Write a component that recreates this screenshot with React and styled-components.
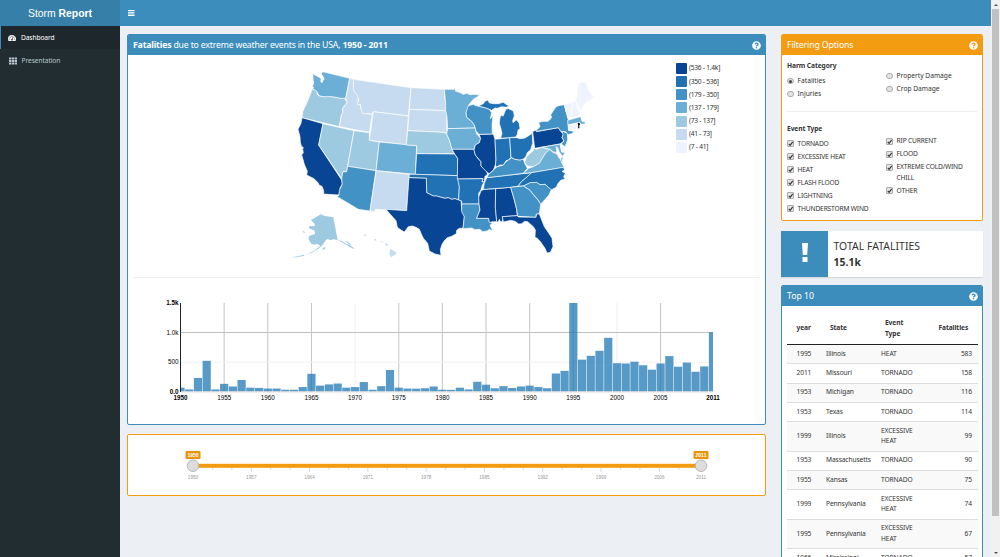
import React from "react";
import styled, { createGlobalStyle } from "styled-components";
import { FaTh, FaQuestionCircle } from "react-icons/fa";

const Global = createGlobalStyle`
  * { box-sizing: border-box; }
  body { margin: 0; overflow: hidden; }
`;

const Page = styled.div`
  display: flex;
  width: 1000px;
  height: 557px;
  overflow: hidden;
  background: #ecf0f5;
  color: #333;
  font: 6.65px/10.3px "Noto Sans", "Open Sans", sans-serif;
`;
const Sidebar = styled.aside`
  width: 120px;
  background: #222d32;
`;
const Logo = styled.div`
  height: 26px;
  background: #367fa9;
  color: #fff;
  text-align: center;
  font: 10.4px/27px "Liberation Sans", Arial, sans-serif;
`;
const NavItem = styled.div`
  display: flex;
  align-items: center;
  gap: 4.5px;
  height: 23px;
  padding-top: 1px;
  padding-left: ${(p) => (p.$active ? 7.4 : 9)}px;
  border-left: ${(p) => (p.$active ? "1.6px solid #3c8dbc" : "0")};
  background: ${(p) => (p.$active ? "#1e282c" : "transparent")};
  color: ${(p) => (p.$active ? "#fff" : "#b8c7ce")};
  letter-spacing: -0.08px;
  svg { width: 8px; height: 8px; }
`;
const Main = styled.div`
  flex: 1;
  min-width: 0;
`;
const Navbar = styled.header`
  display: flex;
  align-items: center;
  height: 26px;
  padding-left: 8px;
  background: #3c8dbc;
  color: #fff;
`;
const Content = styled.div`
  display: flex;
  gap: 15px;
  padding: 8px 8px 0 7px;
`;
const LeftColumn = styled.div`
  display: flex;
  flex-direction: column;
  gap: 9.5px;
  width: 639px;
`;
const RightColumn = styled.div`
  display: flex;
  flex-direction: column;
  width: 202px;
`;
const Box = styled.section`
  height: ${(p) => p.$height}px;
  margin-bottom: ${(p) => p.$after || 0}px;
  border: 1px solid ${(p) => p.$color};
  border-radius: 2px;
  background: #fff;
  overflow: hidden;
`;
const BoxHeader = styled.header`
  display: flex;
  align-items: center;
  justify-content: space-between;
  height: 20px;
  padding: 0 4.5px 0 5px;
  background: ${(p) => p.$color};
  color: #fff;
  font-size: 8.7px;
  letter-spacing: ${(p) => p.$track || 0}px;
  svg { width: 9px; height: 9px; }
`;
const MapArea = styled.div`
  display: flex;
  height: 223px;
  margin: 0 5px;
  padding: 5px 0 0 157px;
  border-bottom: 1px solid #eee;
`;
const MapDrawing = styled.svg`
  flex: none;
  width: 310px;
  height: 210px;
`;
const Legend = styled.div`
  margin: 2px 0 0 76px;
`;
const LegendRow = styled.div`
  display: flex;
  align-items: center;
  gap: 2px;
  height: 13.15px;
  white-space: nowrap;
  letter-spacing: -0.25px;
`;
const Swatch = styled.span`
  width: 11px;
  height: 11px;
  border-radius: 1px;
  background: ${(p) => p.$color};
`;
const Chart = styled.svg`
  display: block;
  width: 600px;
  height: 120px;
  margin: 15px 0 0 32px;
  text { font: 6.3px "Liberation Sans", Arial, sans-serif; fill: #000; }
`;
const Slider = styled.svg`
  display: block;
  width: 540px;
  height: 40px;
  margin: 13px 0 0 50px;
  text { font: 4.7px "Liberation Sans", Arial, sans-serif; fill: #999; text-anchor: middle; }
`;
const FilterBody = styled.div`
  padding: 6.4px 5px 0;
`;
const GroupTitle = styled.div`
  height: 10px;
  line-height: 9px;
  font-weight: 700;
  letter-spacing: -0.08px;
`;
const Choices = styled.div`
  display: grid;
  grid-template-columns: 99px 1fr;
  height: ${(p) => p.$height}px;
  padding-top: 4.6px;
`;
const ChoiceColumn = styled.div`
  margin-top: ${(p) => p.$shift || 0}px;
`;
const Choice = styled.label`
  display: flex;
  align-items: flex-start;
  gap: 4px;
  margin-bottom: 2.7px;
  letter-spacing: ${(p) => p.$track || 0}px;
`;
const Mark = styled.span`
  display: grid;
  place-items: center;
  flex: none;
  width: 6.6px;
  height: 6.6px;
  margin-top: 1.8px;
  border: 0.8px solid #aaa;
  border-radius: ${(p) => (p.$round ? "50%" : "1px")};
  background: #e4e4e4;
  svg { width: 5.4px; height: 5.4px; }
`;
const Dot = styled.i`
  width: 3px;
  height: 3px;
  border-radius: 50%;
  background: #444;
`;
const Divider = styled.div`
  height: 1px;
  margin-bottom: 11.6px;
  background: #eee;
`;
const InfoBox = styled.section`
  display: flex;
  height: 46.5px;
  margin: 0 0 8px;
  background: #fff;
  box-shadow: 0 1px 1px rgba(0, 0, 0, 0.1);
`;
const InfoIcon = styled.div`
  display: grid;
  place-items: center;
  width: 47px;
  padding-bottom: 1px;
  background: #3c8dbc;
`;
const InfoText = styled.div`
  padding: 7px 5.5px;
  font-size: 10.4px;
  line-height: 16px;
  letter-spacing: 0.05px;
  color: #333;
`;
const TableGrid = styled.table`
  width: 191px;
  margin: 9px 5px 0;
  border-collapse: collapse;
  table-layout: fixed;
  letter-spacing: -0.1px;
`;
const HeadCell = styled.th`
  width: ${(p) => p.$width}px;
  height: 29.5px;
  padding: 0 0 0 ${(p) => p.$pad}px;
  border-bottom: 1px solid #222;
  text-align: left;
  vertical-align: middle;
  position: relative;
  top: -1px;
`;
const Row = styled.tr`
  height: ${(p) => (p.$tall ? 29.5 : 19.25)}px;
  background: ${(p) => (p.$odd ? "#f9f9f9" : "#fff")};
`;
const Cell = styled.td`
  padding: 0 ${(p) => (p.$right ? 6 : 0)}px 0 ${(p) => p.$pad || 0}px;
  border-top: 1px solid #ddd;
  text-align: ${(p) => (p.$right ? "right" : "left")};
  white-space: ${(p) => (p.$wrap ? "normal" : "nowrap")};
`;
const Scrollbar = styled.div`
  display: flex;
  flex-direction: column;
  align-items: center;
  width: 9px;
  padding: 4px 0 3px;
  background: #f1f1f1;
`;
const Thumb = styled.div`
  width: 7.5px;
  height: 507px;
  margin: 3px 0 auto;
  background: #c1c1c1;
`;
const Arrow = styled.span`
  width: 0;
  height: 0;
  border: 2px solid transparent;
  border-${(p) => (p.$down ? "top" : "bottom")}: 2.5px solid #505050;
  border-${(p) => (p.$down ? "bottom" : "top")}: 0;
`;

const shades = ["#084594", "#2171b5", "#4292c6", "#6baed6", "#9ecae1", "#c6dbef", "#eff3ff"];
const ranges = ["(536 - 1.4k]", "(350 - 536]", "(179 - 350]", "(137 - 179]", "(73 - 137]", "(41 - 73]", "(7 - 41]"];

// Each shape: key, shade index, outline.
const states = [
  ["WA", 3, "69,40 74,45 80,47 85,51 92,53 93,58 92,64 96,69 98,61 102,60 101,53 98,47 93,42 98,36 102,36 179,55 167,116 150,115 130,111 105,111 88,108 82,97 67,87 71,84 67,78 71,72 69,55"],
  ["OR", 4, "67,87 75,90 80,94 82,104 88,108 105,111 112,109 130,111 150,115 165,115 167,121 172,126 167,133 157,146 159,156 154,166 148,200 36,173 38,155 50,130 60,105"],
  ["CA", 0, "36,173 99,191 86,255 155,360 157,372 150,384 150,392 146,405 101,402 101,392 96,379 88,376 84,368 72,356 50,345 52,333 46,320 42,310 39,298 35,285 40,278 37,263 41,264 34,258 31,247 30,230 24,208 33,190"],
  ["NV", 4, "99,191 192,212 173,318 170,335 160,334 158,340 156,358 86,255"],
  ["ID", 5, "179,55 191,58 190,78 195,90 206,110 203,125 211,133 213,147 222,160 247,163 238,217 148,200 154,166 159,156 157,146 167,133 172,126 167,116"],
  ["MT", 5, "191,58 363,83 355,168 250,155 247,163 233,160 219,162 213,147 211,133 203,135 203,125 207,121 202,107 190,90"],
  ["WY", 5, "250,155 355,168 349,255 238,241"],
  ["UT", 4, "192,212 238,218 238,241 268,246 258,332 173,319"],
  ["AZ", 2, "173,319 258,332 240,453 205,448 142,410 147,405 148,392 157,372 155,357 158,336 170,335"],
  ["CO", 3, "268,246 380,257 376,343 258,332"],
  ["NM", 5, "258,332 358,343 350,452 288,448 287,450 256,448 254,456 240,453"],
  ["ND", 5, "363,83 463,88 464,110 467,130 467,152 358,148"],
  ["SD", 5, "358,148 467,152 471,170 470,205 472,222 464,218 453,217 440,216 353,212"],
  ["NE", 4, "353,212 440,216 453,217 464,218 470,222 478,240 483,255 486,268 494,281 380,281 380,257 349,255"],
  ["KS", 1, "380,281 494,282 503,295 503,347 376,343"],
  ["OK", 1, "358,343 377,343 503,347 508,380 506,420 495,416 485,418 475,413 465,415 450,411 440,408 430,408 410,398 409,355 357,353"],
  ["TX", 0, "357,353 409,355 410,398 430,408 440,408 450,411 465,415 475,413 485,418 495,416 513,422 515,448 521,460 523,470 519,505 508,505 500,511 499,521 485,529 472,533 463,542 456,553 451,569 453,586 435,582 418,573 413,550 400,535 393,520 388,508 378,502 367,498 355,500 343,516 333,510 322,502 318,482 300,462 288,448 350,452"],
  ["MN", 3, "463,88 492,88 493,82 497,94 508,97 520,103 530,100 540,104 555,103 570,106 550,118 536,135 535,150 528,157 530,172 545,184 553,195 555,204 473,206 471,170 467,152 467,130"],
  ["IA", 3, "473,206 555,204 560,222 572,235 568,248 556,255 552,268 486,268 478,240 470,222"],
  ["MO", 0, "486,268 552,268 556,285 565,297 573,305 573,318 587,330 592,340 590,347 585,348 583,365 576,366 579,356 502,357 503,295 494,282"],
  ["AR", 1, "503,357 579,356 576,366 583,365 576,378 573,390 566,400 567,432 515,432 515,423 506,420 508,380"],
  ["LA", 2, "515,432 567,432 570,450 560,475 596,475 598,485 607,490 600,496 609,514 598,508 592,513 577,515 570,508 555,509 545,504 519,506 523,470 515,455"],
  ["MS", 0, "583,388 617,386 616,440 620,485 607,485 598,488 596,475 560,475 570,450 567,432 566,412 573,392"],
  ["AL", 0, "617,386 662,382 673,420 680,448 682,467 637,470 638,484 632,486 628,478 625,486 620,485 616,440"],
  ["TN", 1, "590,353 725,338 720,345 704,357 693,366 685,378 662,382 580,388 583,370"],
  ["KY", 2, "590,353 596,343 605,335 620,321 640,315 646,307 655,300 665,293 675,298 690,300 700,297 704,310 712,325 700,340"],
  ["IL", 0, "567,223 610,222 615,238 618,300 616,315 610,330 597,341 587,333 573,318 573,305 556,285 552,270 556,255 568,248 572,235"],
  ["IN", 1, "615,238 659,233 663,292 655,300 648,302 640,315 630,315 620,321 616,315 618,300"],
  ["OH", 1, "659,233 680,233 690,236 705,234 727,220 728,250 722,269 712,278 707,291 700,297 690,300 675,298 663,292"],
  ["MI", 1, "648,147 656,146 670,153 673,168 668,181 669,188 679,180 687,188 690,205 684,211 682,223 677,231 632,235 636,220 632,203 628,190 629,180 631,170 636,164 639,169 644,157"],
  ["UP", 1, "565,138 580,131 585,124 594,120 598,129 612,131 625,131 640,127 650,134 658,138 648,142 635,140 622,145 615,144 605,151 598,148 583,143"],
  ["WI", 2, "535,137 550,133 555,136 565,139 583,143 598,148 605,158 601,176 609,167 606,195 607,222 567,223 558,213 553,195 545,184 530,172 528,157"],
  ["PA", 0, "728,215 738,210 739,215 805,203 813,215 822,222 816,232 822,243 810,252 734,265"],
  ["NY", 2, "738,212 750,200 746,187 760,184 774,184 781,178 785,172 782,164 797,142 805,137 823,134 828,155 832,163 835,180 835,211 850,214 857,210 845,221 832,224 827,215 813,215 805,203 740,214"],
  ["NJ", 2, "816,213 832,220 833,240 825,260 814,252 822,243 816,232 819,225"],
  ["VT", 6, "823,134 850,127 844,150 844,172 833,175"],
  ["NH", 6, "850,127 856,120 869,158 865,169 844,174 844,150"],
  ["ME", 6, "856,120 862,108 861,92 866,70 873,65 880,68 887,65 897,95 902,97 906,105 914,110 905,116 900,124 892,123 885,133 878,139 872,155"],
  ["MA", 3, "833,181 865,172 872,170 876,184 886,186 885,192 875,193 868,187 834,195"],
  ["CT", 6, "834,195 863,190 863,205 837,212"],
  ["WV", 4, "732,265 739,268 755,262 770,266 782,268 767,279 757,295 748,310 730,320 712,318 704,307 709,292 720,280 729,273"],
  ["VA", 3, "780,268 787,276 801,282 806,292 813,301 816,310 822,322 725,338 700,340 716,325 730,320 748,310 757,295 767,279"],
  ["MD", 3, "755,262 810,252 815,276 825,277 819,290 808,277 803,263 799,260 800,278 788,275 782,268"],
  ["DE", 6, "811,252 818,258 827,275 815,276"],
  ["VB", 3, "813,292 819,292 817,308 813,303"],
  ["NC", 1, "725,338 820,322 824,330 816,334 826,340 821,350 825,357 812,361 803,372 799,382 783,390 765,373 750,374 740,368 720,369 700,378 685,378 693,366 704,357"],
  ["SC", 2, "700,378 720,368 740,367 750,374 765,373 784,389 777,405 752,433 744,420 730,404 720,391"],
  ["GA", 2, "662,382 700,378 720,391 730,404 744,420 752,433 748,461 738,463 738,472 683,469 680,448 673,420"],
  ["FL", 0, "637,470 682,467 685,471 738,472 740,462 748,462 763,500 776,519 786,535 789,560 781,577 771,579 765,565 752,546 742,535 735,532 736,510 730,500 713,485 704,484 695,491 686,492 675,484 662,481 640,486"],
];
const islands = [
  ["AK", 4, "80,470 92,463 105,468 130,472 143,540 130,538 120,541 114,537 107,541 98,555 84,567 65,578 48,585 75,571 91,557 80,551 75,554 65,552 60,545 55,535 58,527 75,523 74,512 57,505 58,498 73,499 75,493 63,480"],
  ["AK2", 4, "143,540 155,543 166,550 180,556 196,567 186,565 170,555 155,547"],
  ["AK3", 4, "165,541 174,545 184,556 179,555"],
  ["AK4", 4, "97,568 104,560 107,564 100,570"],
  ["AK5", 4, "38,514 45,515 45,518 39,517"],
  ["AK6", 4, "1,592 16,590 30,587 42,584 43,587 20,592"],
  ["HI", 5, "301,566 318,577 320,581 303,592 298,581"],
  ["HI2", 5, "285,549 295,553 293,557 287,555"],
  ["HI3", 5, "253,536 259,538 258,542 253,541"],
  ["HI4", 5, "221,525 227,523 229,527 223,528"],
  ["HI5", 5, "271,544 280,545 278,547 272,546"],
];

const deaths = [65, 35, 230, 520, 35, 130, 85, 195, 65, 60, 50, 50, 30, 30, 75, 300, 100, 120, 135, 65, 75, 160, 30, 90, 365, 65, 50, 48, 55, 85, 30, 28, 65, 35, 165, 115, 55, 90, 60, 85, 100, 75, 55, 305, 350, 1500, 540, 605, 690, 910, 480, 475, 505, 445, 370, 475, 600, 420, 490, 335, 425, 1005];

const rows = [
  [1995, "Illinois", "HEAT", 583],
  [2011, "Missouri", "TORNADO", 158],
  [1953, "Michigan", "TORNADO", 116],
  [1953, "Texas", "TORNADO", 114],
  [1999, "Illinois", "EXCESSIVE HEAT", 99],
  [1953, "Massachusetts", "TORNADO", 90],
  [1955, "Kansas", "TORNADO", 75],
  [1999, "Pennsylvania", "EXCESSIVE HEAT", 74],
  [1995, "Pennsylvania", "EXCESSIVE HEAT", 67],
  [1966, "Mississippi", "TORNADO", 57],
];

function GaugeIcon() {
  return (
    <svg viewBox="0 0 16 16">
      <path d="M8 2a8 8 0 0 0-8 8c0 1.700.5 3 1.200 4.200h13.600A8 8 0 0 0 8 2z" fill="#fff" />
      <g fill="#1e282c">
        <circle cx="2.700" cy="10" r="1.100" />
        <circle cx="4.300" cy="6.200" r="1.100" />
        <circle cx="8" cy="4.600" r="1.100" />
        <circle cx="11.700" cy="6.200" r="1.100" />
        <circle cx="13.300" cy="10" r="1.100" />
        <circle cx="8" cy="11.500" r="1.700" />
        <path d="M7.400 11 8.700 6.500l.9.200L8.700 11.500z" />
      </g>
    </svg>
  );
}

function BarsIcon() {
  return (
    <svg width="6.500" height="6" viewBox="0 0 6.500 6">
      <path d="M0 0h6.500v1.300H0zM0 2.300h6.500v1.300H0zM0 4.600h6.500v1.300H0z" fill="#fff" />
    </svg>
  );
}

function StateMap() {
  return (
    <MapDrawing viewBox="0 0 930 630">
      {states.map(([key, shade, points]) => (
        <polygon key={key} points={points} fill={shades[shade]} stroke="#fff" strokeWidth="2" strokeLinejoin="round" />
      ))}
      {islands.map(([key, shade, points]) => (
        <polygon key={key} points={points} fill={shades[shade]} />
      ))}
      <path d="M863 189l4 -1 4 5 -3 3v9h-4l1 -8z" fill="#000" />
    </MapDrawing>
  );
}

function BarChart() {
  const step = 532.5 / 61;
  const left = 20.5;
  const base = 98.5;
  const ticks = [1950, 1955, 1960, 1965, 1970, 1975, 1980, 1985, 1990, 1995, 2000, 2005, 2011];
  return (
    <Chart viewBox="0 0 600 120">
      {ticks.slice(1, -1).map((t) => (
        <line key={t} x1={left + (t - 1950) * step} x2={left + (t - 1950) * step} y1="10" y2={base} stroke={t === 1970 || t === 2000 ? "#eee" : "#c4c4c4"} strokeWidth="1" />
      ))}
      <line x1={left} x2="553" y1="39.5" y2="39.5" stroke="#c0c0c0" />
      <line x1={left} x2="553" y1="69.2" y2="69.2" stroke="#f1f1f1" />
      {deaths.map((d, i) => {
        const x = Math.max(left, left + i * step - 4.1);
        const end = Math.min(left + 532.5, left + i * step + 4.1);
        const h = (d / 1500) * 88.5;
        return <rect key={i} x={x} y={base - h} width={end - x} height={h} fill="#1f77b4" fillOpacity="0.75" />;
      })}
      <line x1={left} x2="553" y1="99" y2="99" stroke="#e4dcd8" />
      <line x1={left} x2={left} y1="10" y2="99" stroke="#222" />
      {["1.5k", "1.0k", "500", "0.0"].map((label, i) => (
        <text key={label} x="18.5" y={12 + i * 29.5} textAnchor="end" style={{ fontWeight: i % 3 === 0 ? 700 : 400 }}>{label}</text>
      ))}
      {ticks.map((t) => (
        <text key={t} x={left + (t - 1950) * step} y="107" textAnchor="middle" style={{ fontWeight: t === 1950 || t === 2011 ? 700 : 400 }}>{t}</text>
      ))}
    </Chart>
  );
}

function YearSlider() {
  const years = [1950, 1957, 1964, 1971, 1978, 1985, 1992, 1999, 2006, 2011];
  const at = (y) => 15 + ((y - 1950) / 61) * 508;
  return (
    <Slider viewBox="0 0 540 40">
      {Array.from({ length: 27 }, (_, i) => (
        <line key={i} x1={15 + i * 19.43} x2={15 + i * 19.43} y1="20" y2={i % 3 ? 22 : 24} stroke={i % 3 ? "#ccc" : "#b5c8d8"} strokeWidth="0.7" />
      ))}
      <rect x="15" y="15.8" width="508" height="4" fill="#f39c12" />
      {[15, 523].map((x, i) => (
        <g key={x}>
          <rect x={x - 7.5} y="3" width="15" height="8" rx="1" fill="#e8940c" />
          <text x={x} y="9" style={{ fill: "#fff", fontWeight: 700, fontSize: 5 }}>{i ? 2011 : 1950}</text>
          <circle cx={x} cy="17.7" r="5.8" fill="#ddd" stroke="#aaa" strokeWidth="0.8" />
        </g>
      ))}
      {years.map((y) => <text key={y} x={at(y)} y="31">{y}</text>)}
    </Slider>
  );
}

function Option({ label, on, round }) {
  return (
    <Choice $track={round ? 0 : -0.17}>
      <Mark $round={round}>
        {on && (round ? <Dot /> : <svg viewBox="0 0 10 10"><path d="M1.5 5.2 4 8 8.8 1.8" fill="none" stroke="#333" strokeWidth="2.2" /></svg>)}
      </Mark>
      <span>{label}</span>
    </Choice>
  );
}

export default function App() {
  return (
    <Page>
      <Global />
      <Sidebar>
        <Logo>Storm <b>Report</b></Logo>
        <NavItem $active><GaugeIcon />Dashboard</NavItem>
        <NavItem><FaTh />Presentation</NavItem>
      </Sidebar>
      <Main>
        <Navbar><BarsIcon /></Navbar>
        <Content>
          <LeftColumn>
            <Box $height={390.5} $color="#3c8dbc">
              <BoxHeader $color="#3c8dbc" $track={-0.17}>
                <span><b>Fatalities</b> due to extreme weather events in the USA, <b>1950 - 2011</b></span>
                <FaQuestionCircle />
              </BoxHeader>
              <MapArea>
                <StateMap />
                <Legend>
                  {ranges.map((r, i) => <LegendRow key={r}><Swatch $color={shades[i]} />{r}</LegendRow>)}
                </Legend>
              </MapArea>
              <BarChart />
            </Box>
            <Box $height={62} $color="#f39c12"><YearSlider /></Box>
          </LeftColumn>
          <RightColumn>
            <Box $height={187} $after={9.5} $color="#f39c12">
              <BoxHeader $color="#f39c12" $track={-0.1}>Filtering Options<FaQuestionCircle /></BoxHeader>
              <FilterBody>
                <GroupTitle>Harm Category</GroupTitle>
                <Choices $height={40}>
                  <ChoiceColumn>
                    <Option label="Fatalities" round on />
                    <Option label="Injuries" round />
                  </ChoiceColumn>
                  <ChoiceColumn $shift={-5}>
                    <Option label="Property Damage" round />
                    <Option label="Crop Damage" round />
                  </ChoiceColumn>
                </Choices>
                <Divider />
                <GroupTitle>Event Type</GroupTitle>
                <Choices $height={84}>
                  <ChoiceColumn>
                    {["TORNADO", "EXCESSIVE HEAT", "HEAT", "FLASH FLOOD", "LIGHTNING", "THUNDERSTORM WIND"].map((l) => <Option key={l} label={l} on />)}
                  </ChoiceColumn>
                  <ChoiceColumn $shift={-2.2}>
                    {["RIP CURRENT", "FLOOD", "EXTREME COLD/WIND CHILL", "OTHER"].map((l) => <Option key={l} label={l} on />)}
                  </ChoiceColumn>
                </Choices>
              </FilterBody>
            </Box>
            <InfoBox>
              <InfoIcon>
                <svg width="8" height="20" viewBox="0 0 8 20"><path d="M1 0h6l-.8 12H1.8zM1.500 14h5v5h-5z" fill="#fff" /></svg>
              </InfoIcon>
              <InfoText>TOTAL FATALITIES<br /><b>15.1k</b></InfoText>
            </InfoBox>
            <Box $height={330} $color="#3c8dbc">
              <BoxHeader $color="#3c8dbc">Top 10<FaQuestionCircle /></BoxHeader>
              <TableGrid>
                <thead>
                  <tr>
                    <HeadCell $width={39} $pad={9.5}>year</HeadCell>
                    <HeadCell $width={55} $pad={4}>State</HeadCell>
                    <HeadCell $width={47} $pad={4}>Event<br />Type</HeadCell>
                    <HeadCell $width={50} $pad={10.5}>Fatalities</HeadCell>
                  </tr>
                </thead>
                <tbody>
                  {rows.map(([year, state, event, count], i) => (
                    <Row key={i} $odd={i % 2 === 0} $tall={event.startsWith("EXC")}>
                      <Cell $pad={9.5}>{year}</Cell>
                      <Cell>{state}</Cell>
                      <Cell $wrap>{event}</Cell>
                      <Cell $right>{count}</Cell>
                    </Row>
                  ))}
                </tbody>
              </TableGrid>
            </Box>
          </RightColumn>
        </Content>
      </Main>
      <Scrollbar>
        <Arrow />
        <Thumb />
        <Arrow $down />
      </Scrollbar>
    </Page>
  );
}
